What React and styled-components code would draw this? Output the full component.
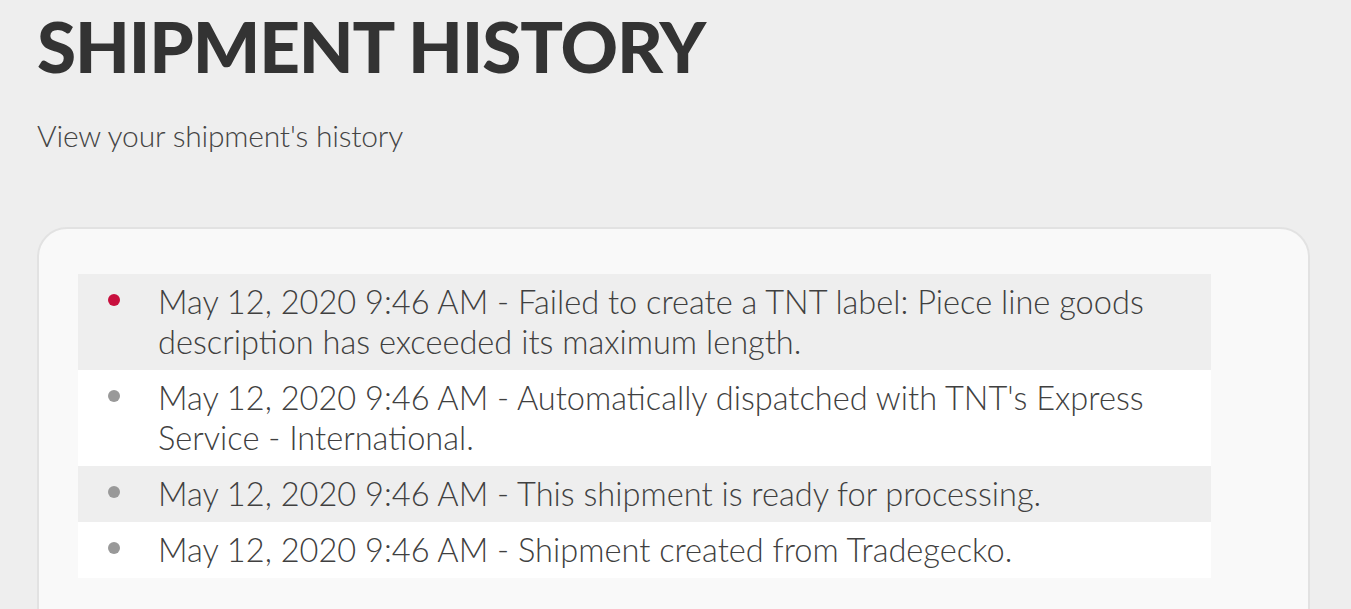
import styled, { createGlobalStyle } from "styled-components";

const GlobalStyle = createGlobalStyle`
    html, body {
        margin: 0;
        padding: 0;
        background: #eeeeee;
        overflow: hidden;
    }
    body {
        font-family: Lato, "Open Sans", sans-serif;
        color: #333333;
    }
`;

const events = [
    {
        text: "May 12, 2020 9:46 AM - Failed to create a TNT label: Piece line goods description has exceeded its maximum length.",
        error: true,
    },
    {
        text: "May 12, 2020 9:46 AM - Automatically dispatched with TNT's Express Service - International.",
    },
    {
        text: "May 12, 2020 9:46 AM - This shipment is ready for processing.",
    },
    {
        text: "May 12, 2020 9:46 AM - Shipment created from Tradegecko.",
    },
];

const App = () => {
    return (
        <PageStyles>
            <GlobalStyle />
            <h1 className="title">SHIPMENT HISTORY</h1>
            <p className="subtitle">View your shipment's history</p>
            <Card>
                <History>
                    {events.map((event, i) => (
                        <Event key={i}>
                            <Dot $error={event.error} />
                            <span>{event.text}</span>
                        </Event>
                    ))}
                </History>
            </Card>
        </PageStyles>
    );
};

const PageStyles = styled.div`
    padding: 0 41px 0 37px;
    .title {
        margin: 0;
        padding-top: 6px;
        font-size: 71px;
        line-height: 80px;
        font-weight: 900;
        letter-spacing: -1.1px;
        color: #333333;
    }
    .subtitle {
        margin: 29px 0 0 0;
        font-size: 30px;
        line-height: 40px;
        font-weight: 300;
        letter-spacing: -0.2px;
        color: #444444;
    }
`;

const Card = styled.div`
    margin-top: 72px;
    background: #f9f9f9;
    border: 2px solid #e2e2e2;
    border-radius: 30px;
    padding: 45px 97px 60px 39px;
`;

const History = styled.ul`
    list-style: none;
    margin: 0;
    padding: 0;
`;

const Event = styled.li`
    display: flex;
    align-items: flex-start;
    padding: 8px 30px 8px 30px;
    font-size: 32.6px;
    line-height: 40px;
    font-weight: 300;
    color: #404040;
    background: #ffffff;
    &:nth-child(odd) {
        background: #eeeeee;
    }
`;

const Dot = styled.i`
    flex: none;
    width: 12px;
    height: 12px;
    margin: 12px 38px 0 0;
    border-radius: 50%;
    background: ${(props) => (props.$error ? "#c8103e" : "#999999")};
`;

export default App;
